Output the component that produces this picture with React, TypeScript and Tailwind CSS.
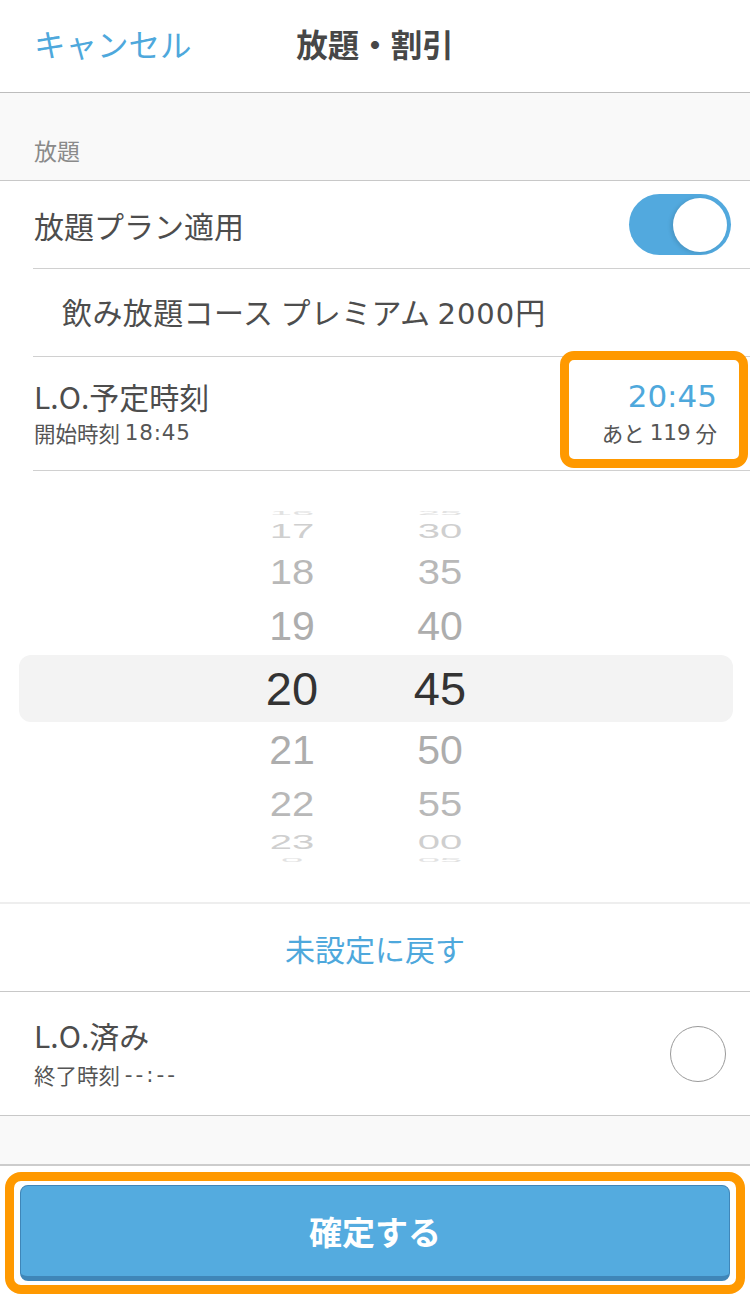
import React from "react";

const jp = { fontFamily: '"Noto Sans CJK JP", "Noto Sans", sans-serif' } as const;
const num = { fontFamily: '"Liberation Sans", Arial, sans-serif' } as const;
const dg = { fontFamily: '"DejaVu Sans", "Noto Sans CJK JP", sans-serif' } as const;

type PickRow = {
  h: string;
  m: string;
  height: number;
  size: number;
  scale: number;
  color: string;
  selected?: boolean;
};

const rows: PickRow[] = [
  { h: "16", m: "25", height: 10, size: 40, scale: 0.12, color: "#e2e2e2" },
  { h: "17", m: "30", height: 26, size: 40, scale: 0.5, color: "#cfcfcf" },
  { h: "18", m: "35", height: 56, size: 40, scale: 0.86, color: "#b8b8b8" },
  { h: "19", m: "40", height: 52, size: 41, scale: 0.97, color: "#adadad" },
  { h: "20", m: "45", height: 72, size: 47, scale: 1, color: "#333333", selected: true },
  { h: "21", m: "50", height: 52, size: 41, scale: 0.97, color: "#adadad" },
  { h: "22", m: "55", height: 56, size: 40, scale: 0.86, color: "#b8b8b8" },
  { h: "23", m: "00", height: 20, size: 40, scale: 0.5, color: "#cfcfcf" },
  { h: "0", m: "05", height: 16, size: 40, scale: 0.12, color: "#e2e2e2" },
];

function Picker() {
  return (
    <div className="h-[433px] pt-[37px] border-b-2 border-[#eeeeee] bg-white overflow-hidden">
      {rows.map((r, i) => (
        <div
          key={i}
          className="flex items-center ml-[19px] mr-[17px]"
          style={{ height: r.height }}
        >
          <div
            className={
              r.selected
                ? "flex items-center w-full h-[67px] rounded-[12px] bg-[#f3f3f3] pl-[199px]"
                : "flex items-center w-full h-full pl-[199px]"
            }
          >
            {[r.h, r.m].map((t, j) => (
              <div
                key={j}
                className="w-[148px] text-center leading-none"
                style={{
                  ...num,
                  fontSize: r.size,
                  color: r.color,
                  transform: `scaleY(${r.scale})`,
                }}
              >
                {t}
              </div>
            ))}
          </div>
        </div>
      ))}
    </div>
  );
}

export default function App() {
  return (
    <div className="w-[750px] h-[1298px] bg-white flex flex-col overflow-hidden" style={jp}>
      {/* Header */}
      <div className="h-[93px] grid grid-cols-[1fr_auto_1fr] items-center border-b border-[#bdbdbd] bg-white">
        <div className="pl-[34px] text-[31.5px] text-[#4ea8dc] leading-none pb-[4px]">キャンセル</div>
        <div className="text-[31.5px] font-bold text-[#474747] leading-none pb-[4px]">放題・割引</div>
        <div />
      </div>

      {/* Section header */}
      <div className="h-[88px] bg-[#f9f9f9] border-b border-[#c8c8c8] flex items-end pl-[34px] pb-[18px]">
        <span className="text-[23px] text-[#8a8a8a] leading-none">放題</span>
      </div>

      {/* Toggle row */}
      <div className="ml-[33px] h-[88px] border-b border-[#d0d0d0] flex items-center justify-between pl-[1px] pr-[19px]">
        <span className="text-[30px] text-[#4d4d4d] leading-none">放題プラン適用</span>
        <div className="w-[102px] h-[61px] rounded-full bg-[#52a9de] flex items-center justify-end pr-[4px]">
          <div className="w-[54px] h-[54px] rounded-full bg-white shadow-[-2px_1px_4px_rgba(0,0,0,0.12)]" />
        </div>
      </div>

      {/* Course row */}
      <div className="ml-[33px] h-[88px] border-b border-[#d0d0d0] flex items-center pl-[29px]">
        <span className="text-[30px] text-[#4d4d4d] leading-none whitespace-pre tracking-[0.4px]">
          飲み放題コース プレミアム <span style={dg} className="text-[29px] tracking-[1px]">2000</span>円
        </span>
      </div>

      {/* L.O. scheduled time row */}
      <div className="relative ml-[33px] h-[114px] border-b border-[#d0d0d0] flex items-center justify-between pl-[1px] pr-[33px]">
        <div className="flex flex-col">
          <div className="h-[40px] flex items-center text-[30px] text-[#4d4d4d]">L.O.予定時刻</div>
          <div className="h-[34px] flex items-center text-[21.5px] text-[#555555] whitespace-pre">
            開始時刻 <span style={dg} className="tracking-[0.8px]">18:45</span>
          </div>
        </div>
        <div className="flex flex-col items-end">
          <div className="h-[40px] flex items-center text-[31px] text-[#4ea8dc]" style={dg}>20:45</div>
          <div className="h-[34px] flex items-center text-[21.5px] text-[#555555] whitespace-pre">
            あと <span style={dg}>119</span> 分
          </div>
        </div>
        <div className="absolute right-[2px] top-[-6px] bottom-[2px] w-[188px] border-[9px] border-[#ff9900] rounded-[14px] pointer-events-none" />
      </div>

      {/* Wheel picker */}
      <Picker />

      {/* Reset */}
      <div className="h-[88px] border-b border-[#c8c8c8] flex items-center justify-center">
        <span className="text-[30px] text-[#4ea8dc] leading-none">未設定に戻す</span>
      </div>

      {/* L.O. done row */}
      <div className="h-[124px] border-b border-[#c8c8c8] flex items-center justify-between pl-[34px] pr-[24px]">
        <div className="flex flex-col">
          <div className="h-[44px] flex items-center text-[30px] text-[#4d4d4d]">L.O.済み</div>
          <div className="h-[36px] flex items-center text-[21.5px] text-[#555555] whitespace-pre">
            終了時刻 <span style={dg} className="tracking-[3px]">--:--</span>
          </div>
        </div>
        <div className="w-[56px] h-[56px] rounded-full border border-[#9a9a9a] bg-white" />
      </div>

      {/* Gray spacer */}
      <div className="h-[50px] bg-[#f9f9f9] border-b-2 border-[#cccccc]" />

      {/* Bottom bar */}
      <div className="flex-1 bg-white px-[5px] pt-[6px] pb-[4px]">
        <div className="h-full border-[9px] border-[#ff9900] rounded-[16px] bg-white px-[6px] py-[4px]">
          <div className="h-full rounded-[8px] bg-[#54abdf] border border-[#3f86b8] border-b-[5px] flex items-center justify-center">
            <span className="text-[33px] font-bold text-white leading-none">確定する</span>
          </div>
        </div>
      </div>
    </div>
  );
}
